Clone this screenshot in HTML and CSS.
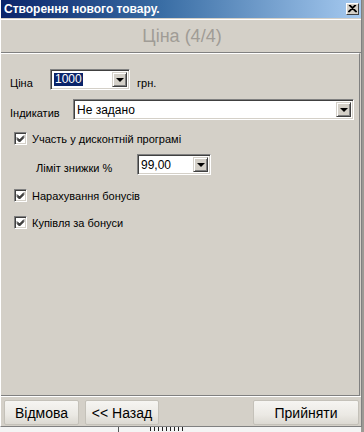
FILE: index.html
```html
<!DOCTYPE html>
<html lang="uk">
<head>
    <meta charset="UTF-8">
    <title>Створення нового товару.</title>
    <link rel="stylesheet" href="styles.css">
</head>
<body>
    <div class="window">
        <div class="titlebar">
            <span class="title-text">Створення нового товару.</span>
            <span class="close-button">
                <svg width="9" height="8" viewBox="0 0 9 8"><path d="M1 0 L8 7 M8 0 L1 7 M2 0 L9 7 M7 0 L0 7" stroke="#000" stroke-width="1.1" fill="none"/></svg>
            </span>
        </div>

        <div class="step-header">Ціна (4/4)</div>

        <div class="panel">
            <div class="row row-price">
                <span class="label label-price">Ціна</span>
                <div class="combo combo-price">
                    <span class="combo-value"><span class="selected">1000</span></span>
                    <span class="combo-arrow"><i class="triangle"></i></span>
                </div>
                <span class="label label-unit">грн.</span>
            </div>

            <div class="row row-indicator">
                <span class="label label-indicator">Індикатив</span>
                <div class="combo combo-indicator">
                    <span class="combo-value">Не задано</span>
                    <span class="combo-arrow"><i class="triangle"></i></span>
                </div>
            </div>

            <label class="check check-discount">
                <span class="check-box"><svg width="9" height="9" viewBox="0 0 9 9"><path d="M1 3.5 L3.5 6 L8 1.5 M1 4.5 L3.5 7 L8 2.5 M1 5.5 L3.5 8 L8 3.5" stroke="#000" stroke-width="1" fill="none"/></svg></span>
                <span class="check-text">Участь у дисконтній програмі</span>
            </label>

            <div class="row row-limit">
                <span class="label label-limit">Ліміт знижки %</span>
                <div class="combo combo-limit">
                    <span class="combo-value">99,00</span>
                    <span class="combo-arrow"><i class="triangle"></i></span>
                </div>
            </div>

            <label class="check check-bonus">
                <span class="check-box"><svg width="9" height="9" viewBox="0 0 9 9"><path d="M1 3.5 L3.5 6 L8 1.5 M1 4.5 L3.5 7 L8 2.5 M1 5.5 L3.5 8 L8 3.5" stroke="#000" stroke-width="1" fill="none"/></svg></span>
                <span class="check-text">Нарахування бонусів</span>
            </label>

            <label class="check check-buy">
                <span class="check-box"><svg width="9" height="9" viewBox="0 0 9 9"><path d="M1 3.5 L3.5 6 L8 1.5 M1 4.5 L3.5 7 L8 2.5 M1 5.5 L3.5 8 L8 3.5" stroke="#000" stroke-width="1" fill="none"/></svg></span>
                <span class="check-text">Купівля за бонуси</span>
            </label>
        </div>

        <div class="footer">
            <button class="btn btn-cancel">Відмова</button>
            <button class="btn btn-back">&lt;&lt; Назад</button>
            <button class="btn btn-accept">Прийняти</button>
        </div>
    </div>
    <div class="desktop-strip">
        <span class="strip-line"></span>
        <span class="strip-marks"></span>
    </div>
</body>
</html>
```

FILE: styles.css
```css
body {
    margin: 0;
    width: 364px;
    height: 432px;
    overflow: hidden;
    background-color: #9c9a94;
    font-family: 'Liberation Sans', Arial, sans-serif;
    font-size: 11px;
    color: #000;
}
.window {
    width: 360px;
    height: 426px;
    background-color: #d4d0c8;
    border-left: 1px solid #ffffff;
    border-right: 1px solid #808080;
    border-bottom: 1px solid #808080;
    display: flex;
    flex-direction: column;
}
.titlebar {
    height: 18px;
    background: linear-gradient(to right, #0a246a 0%, #3a6ea5 45%, #a6caf0 100%);
    display: flex;
    align-items: center;
    justify-content: space-between;
    padding: 0 2px 0 3px;
    border-bottom: 1px solid #d4d0c8;
}
.title-text {
    color: #ffffff;
    font-weight: bold;
    font-size: 12px;
}
.close-button {
    width: 13px;
    height: 12px;
    box-sizing: border-box;
    background-color: #d4d0c8;
    border-top: 1px solid #ffffff;
    border-left: 1px solid #ffffff;
    border-right: 1px solid #404040;
    border-bottom: 1px solid #404040;
    display: flex;
    align-items: center;
    justify-content: center;
}
.step-header {
    height: 32px;
    border-top: 1px solid #ffffff;
    border-bottom: 1px solid #808080;
    display: flex;
    align-items: center;
    justify-content: center;
    font-size: 18px;
    color: #a09c96;
    padding-left: 2px;
}
.panel {
    flex: 1;
    border-top: 1px solid #ffffff;
    border-bottom: 1px solid #808080;
    border-right: 1px solid #808080;
    margin-right: 1px;
    padding-left: 9px;
    display: flex;
    flex-direction: column;
    align-items: flex-start;
}
.row {
    display: flex;
    align-items: center;
}
.label {
    padding-top: 6px;
}
.row-price {
    margin-top: 15px;
}
.label-price {
    width: 40px;
}
.label-unit {
    margin-left: 7px;
}
.row-indicator {
    margin-top: 9px;
}
.label-indicator {
    width: 63px;
}
.row-limit {
    margin-top: 9px;
    margin-left: 26px;
}
.label-limit {
    width: 101px;
}
.combo {
    height: 21px;
    box-sizing: border-box;
    background-color: #ffffff;
    border-top: 1px solid #808080;
    border-left: 1px solid #808080;
    border-right: 1px solid #ffffff;
    border-bottom: 1px solid #ffffff;
    box-shadow: inset 1px 1px 0 #404040, inset -1px -1px 0 #d4d0c8;
    display: flex;
    align-items: stretch;
    padding: 2px;
}
.combo-price {
    width: 80px;
}
.combo-indicator {
    width: 281px;
}
.combo-limit {
    width: 74px;
}
.combo-value {
    flex: 1;
    display: flex;
    align-items: center;
    padding-left: 1px;
    font-size: 12px;
}
.selected {
    background-color: #0a246a;
    color: #ffffff;
    padding: 0 1px;
    line-height: 13px;
}
.combo-arrow {
    width: 15px;
    box-sizing: border-box;
    background-color: #d4d0c8;
    border-top: 1px solid #d4d0c8;
    border-left: 1px solid #d4d0c8;
    border-right: 1px solid #404040;
    border-bottom: 1px solid #404040;
    box-shadow: inset 1px 1px 0 #ffffff, inset -1px -1px 0 #808080;
    display: flex;
    align-items: center;
    justify-content: center;
}
.triangle {
    width: 0;
    height: 0;
    border-left: 4px solid transparent;
    border-right: 4px solid transparent;
    border-top: 4px solid #000000;
    margin-top: 1px;
}
.check {
    display: flex;
    align-items: center;
    margin-left: 4px;
}
.check-discount {
    margin-top: 12px;
}
.check-bonus {
    margin-top: 14px;
}
.check-buy {
    margin-top: 14px;
}
.check-box {
    width: 13px;
    height: 13px;
    box-sizing: border-box;
    background-color: #ffffff;
    border-top: 1px solid #808080;
    border-left: 1px solid #808080;
    border-right: 1px solid #ffffff;
    border-bottom: 1px solid #ffffff;
    box-shadow: inset 1px 1px 0 #404040, inset -1px -1px 0 #d4d0c8;
    display: flex;
    align-items: center;
    justify-content: center;
}
.check-text {
    margin-left: 5px;
}
.footer {
    height: 30px;
    border-top: 1px solid #ffffff;
    display: flex;
    align-items: flex-start;
    padding: 3px 0 0 3px;
    box-sizing: border-box;
}
.btn {
    height: 25px;
    font-family: 'Liberation Sans', Arial, sans-serif;
    font-size: 14px;
    color: #000;
    background: linear-gradient(to bottom, #f6f5f2 0%, #ebe9e4 60%, #dcd9d2 100%);
    border: 1px solid #c4c1b9;
    border-radius: 2px;
    padding: 0;
}
.btn-cancel {
    width: 75px;
}
.btn-back {
    width: 74px;
    margin-left: 6px;
}
.btn-accept {
    width: 106px;
    margin-left: auto;
    margin-right: 2px;
}
.desktop-strip {
    height: 5px;
    background-color: #f4f4f4;
    position: relative;
    overflow: hidden;
    width: 361px;
}
.strip-line {
    position: absolute;
    left: 118px;
    top: 0;
    width: 1px;
    height: 5px;
    background-color: #555;
}
.strip-marks {
    position: absolute;
    left: 150px;
    top: 0;
    width: 35px;
    height: 4px;
    background: repeating-linear-gradient(to right, #222 0, #222 1px, transparent 1px, transparent 4px);
}
```
